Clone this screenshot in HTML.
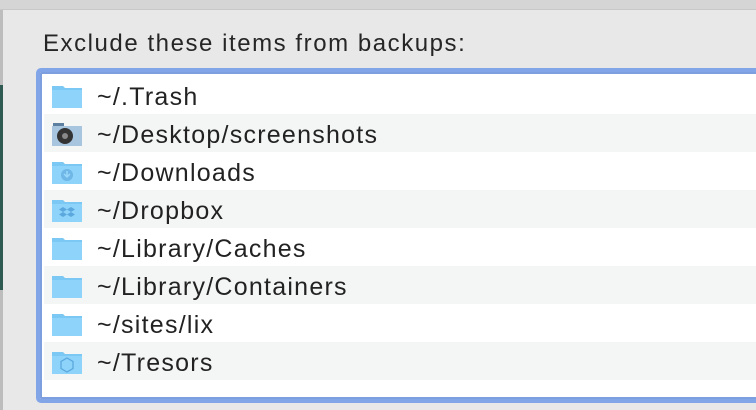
<!DOCTYPE html>
<html><head><style>
body{margin:0;width:756px;height:410px;overflow:hidden;background:#e8e8e8;font-family:"Liberation Sans",sans-serif;position:relative}
.top{position:absolute;left:0;top:0;width:756px;height:9px;background:#d5d5d5;border-bottom:1px solid #c8c8c8}
.ls{position:absolute;left:0;top:10px;width:3px;height:400px;background:#bdbdbd}
.ls2{position:absolute;left:0;top:85px;width:3px;height:205px;background:#2f5a52}
h1{position:absolute;left:43px;top:30px;margin:0;font-size:24px;letter-spacing:1.55px;font-weight:normal;color:#262626}
.box{position:absolute;left:36px;top:68px;width:740px;height:327px;border:4px solid #82a5e8;border-radius:5px;background:#fff;box-shadow:inset 0 0 0 2px #7d9fe0}
.row{position:absolute;left:4px;width:730px;height:38px}
.row.g{background:#f4f5f5}
.row span{position:absolute;left:53px;top:7px;font-size:25px;letter-spacing:1.25px;color:#222}
.row svg{position:absolute;left:7px;top:7px}
</style></head><body>
<div class="top"></div><div class="ls"></div><div class="ls2"></div>
<h1>Exclude these items from backups:</h1>
<div class="box">
<div class="row" style="top:4px"><svg width="32" height="26"><path d="M1 3h11l2 2h17v20H1z" fill="#7cc8f4"/><rect x="1" y="7" width="30" height="18" fill="#8dd3fa"/></svg><span>~/.Trash</span></div>
<div class="row g" style="top:42px"><svg width="32" height="26"><path d="M2 2h11v3H2z" fill="#5d7fa0"/><rect x="1" y="5" width="30" height="20" fill="#a8c5e0"/><circle cx="14" cy="15" r="8" fill="#333"/><circle cx="14" cy="15" r="3" fill="#888"/></svg><span>~/Desktop/screenshots</span></div>
<div class="row" style="top:80px"><svg width="32" height="26"><path d="M1 3h11l2 2h17v20H1z" fill="#7cc8f4"/><rect x="1" y="7" width="30" height="18" fill="#8dd3fa"/><circle cx="16" cy="16" r="6" fill="#6fb7e6"/><path d="M16 12v6M13 15l3 3 3-3" stroke="#9ad8fb" stroke-width="1.5" fill="none"/></svg><span>~/Downloads</span></div>
<div class="row g" style="top:118px"><svg width="32" height="26"><path d="M1 3h11l2 2h17v20H1z" fill="#7cc8f4"/><rect x="1" y="7" width="30" height="18" fill="#8dd3fa"/><path d="M12 10l4 2.5-4 2.5-4-2.5zM20 10l4 2.5-4 2.5-4-2.5zM12 15l4 2.5-4 2.5-4-2.5zM20 15l4 2.5-4 2.5-4-2.5z" fill="#5aa8dd"/></svg><span>~/Dropbox</span></div>
<div class="row" style="top:156px"><svg width="32" height="26"><path d="M1 3h11l2 2h17v20H1z" fill="#7cc8f4"/><rect x="1" y="7" width="30" height="18" fill="#8dd3fa"/></svg><span>~/Library/Caches</span></div>
<div class="row g" style="top:194px"><svg width="32" height="26"><path d="M1 3h11l2 2h17v20H1z" fill="#7cc8f4"/><rect x="1" y="7" width="30" height="18" fill="#8dd3fa"/></svg><span>~/Library/Containers</span></div>
<div class="row" style="top:232px"><svg width="32" height="26"><path d="M1 3h11l2 2h17v20H1z" fill="#7cc8f4"/><rect x="1" y="7" width="30" height="18" fill="#8dd3fa"/></svg><span>~/sites/lix</span></div>
<div class="row g" style="top:270px"><svg width="32" height="26"><path d="M1 3h11l2 2h17v20H1z" fill="#7cc8f4"/><rect x="1" y="7" width="30" height="18" fill="#8dd3fa"/><path d="M16 9l6 3.5v7L16 23l-6-3.5v-7z" fill="none" stroke="#5aa8dd" stroke-width="1.3"/></svg><span>~/Tresors</span></div>
</div>
</body></html>
